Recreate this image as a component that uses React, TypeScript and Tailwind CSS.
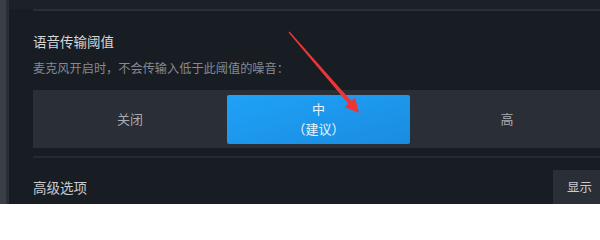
export default function App() {
  const font = { fontFamily: '"Noto Sans CJK SC", "Noto Sans", sans-serif' }

  return (
    <div
      className="relative flex w-[600px] h-[204px] overflow-hidden bg-[#181c23]"
      style={font}
    >
      {/* left sidebar edge */}
      <div className="w-[6px] shrink-0 bg-[#3a3f47]" />
      <div className="w-[3px] shrink-0 bg-[#2a2e36]" />

      <div className="flex flex-col w-[571px] shrink-0 ml-[24px]">
        <div className="h-[9px] -ml-[24px] bg-[#1c2027]" />
        <div className="h-[2px] bg-[#2a2f37]" />

        <div className="mt-[20px] text-[13.5px] leading-[20px] text-[#d3d6da]">语音传输阈值</div>
        <div className="mt-[8px] text-[12.2px] leading-[18px] text-[#858a92]">
          麦克风开启时，不会传输入低于此阈值的噪音：
        </div>

        {/* segmented control */}
        <div className="mt-[13px] flex h-[60px] bg-[#2a2e36]">
          <div className="flex-1 flex items-center justify-center text-[13px] text-[#a8acb2]">关闭</div>
          <div className="mt-[5px] w-[183px] h-[49px] rounded-[2px] bg-linear-to-br from-[#1fa2f7] to-[#1a8ce0] flex flex-col items-center justify-center text-[13px] leading-[20px] text-[#eaf4fd]">
            <span>中</span>
            <span>（建议）</span>
          </div>
          <div className="flex-1 flex items-center justify-center text-[13px] text-[#a8acb2]">高</div>
        </div>

        <div className="mt-[8px] h-[2px] bg-[#262a32]" />

        <div className="mt-[12px] flex items-center justify-between">
          <span className="text-[13.5px] text-[#c8cbcf]">高级选项</span>
          <div className="w-[51px] h-[34px] pl-[14px] flex items-center bg-[#2a2e36] text-[12.5px] text-[#c8cbcf]">
            显示
          </div>
        </div>
      </div>

      {/* annotation arrow */}
      <svg
        className="absolute inset-0 pointer-events-none"
        width="600"
        height="204"
        viewBox="0 0 600 204"
      >
        <polygon
          points="288.5,32.4 289.5,31.6 351.3,101.1 355.1,97.8 359,113 344.5,107 348.3,103.7"
          fill="#ee3535"
        />
      </svg>
    </div>
  )
}
